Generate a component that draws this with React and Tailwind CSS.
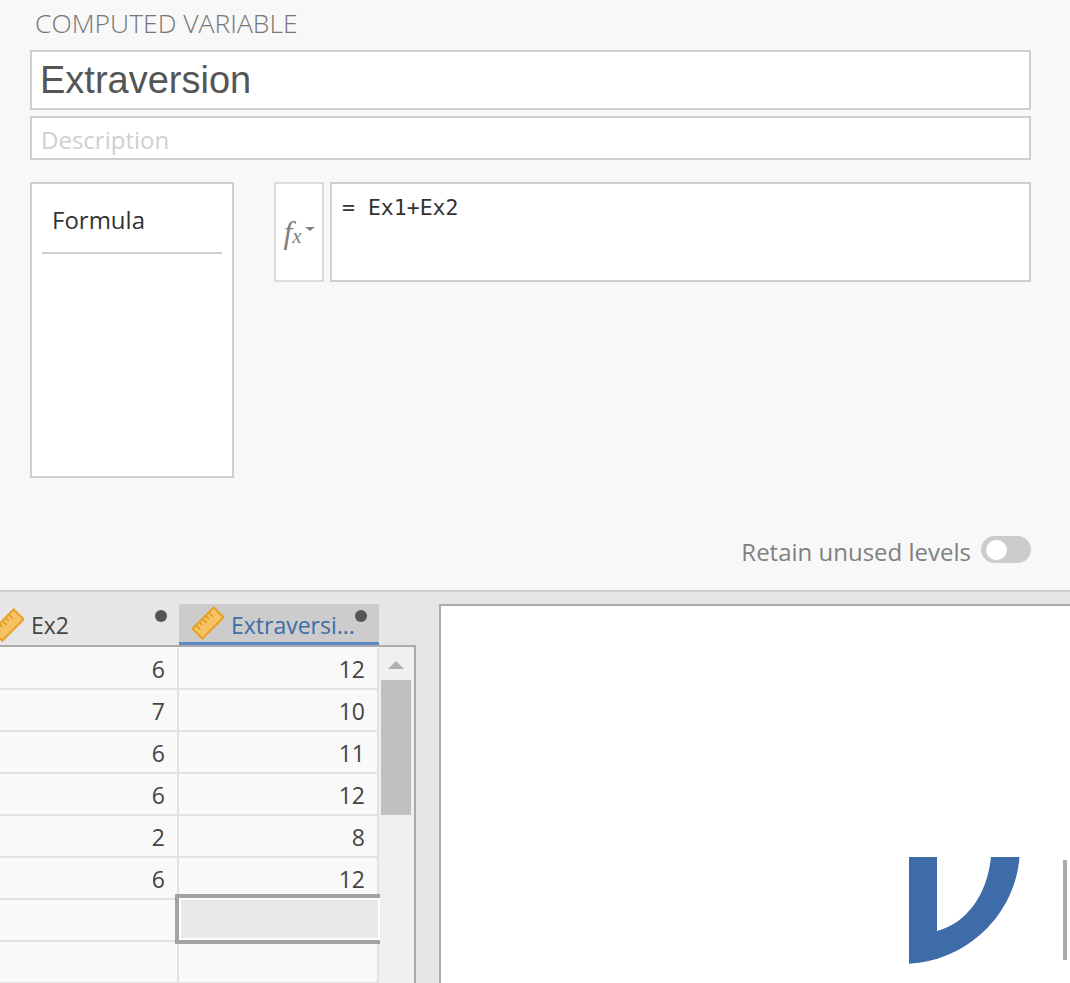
/**
 * App - Computed variable editor above the spreadsheet and results panes.
 */

const ROWS = [
  ["6", "12"],
  ["7", "10"],
  ["6", "11"],
  ["6", "12"],
  ["2", "8"],
  ["6", "12"],
  ["", ""],
  ["", ""],
];

const SELECTED_ROW = 6;

// ---------------------------------------------------------------------------
// Icons
// ---------------------------------------------------------------------------

function RulerIcon({ className = "" }) {
  return (
    <svg className={className} viewBox="0 0 32 34" fill="none" aria-hidden="true">
      <g transform="rotate(-45 16 17)">
        <rect x="1" y="10" width="30" height="14" fill="#f5c264" stroke="#e8a020" strokeWidth="2" />
        <path d="M6 11v5M10.5 11v3.500M15 11v5M19.500 11v3.500M24 11v5" stroke="#d8921a" strokeWidth="1.300" />
      </g>
    </svg>
  );
}

function JamoviMark({ className = "" }) {
  return (
    <svg className={className} viewBox="0 0 111 107" aria-hidden="true">
      <path d="M0 0H28V74C58 66 78 38 82 0H110.500C106 58 58 104 0 106.700Z" fill="#3e6ca8" />
    </svg>
  );
}

// ---------------------------------------------------------------------------
// Editor
// ---------------------------------------------------------------------------

function VariableEditor() {
  return (
    <section className="flex h-[590px] flex-col bg-[#f8f8f8] pl-[30px] pr-[39px] pt-[7px]">
      <h1 className="ml-[5px] h-[43px] text-[26.500px] font-light leading-[33px] text-[#777777] [font-family:'Open_Sans',sans-serif]">
        COMPUTED VARIABLE
      </h1>

      <div className="flex h-[60px] items-center border-2 border-[#cfcfcf] bg-white pl-[8px] pt-[1px] text-[38px] text-[#555555] [font-family:'Liberation_Sans',sans-serif]">
        Extraversion
      </div>
      <div className="mt-[6px] flex h-[44px] items-center border-2 border-[#cfcfcf] bg-white pl-[9px] pt-[4px] text-[24px] text-[#d0d0d0] [font-family:'Open_Sans',sans-serif]">
        Description
      </div>

      <div className="mt-[22px] flex items-start">
        <div className="h-[296px] w-[204px] border-2 border-[#cfcfcf] bg-white px-[10px]">
          <div className="h-[70px] border-b-2 border-[#cfcfcf] pl-[10px] pt-[20px] text-[24px] leading-[32px] text-[#333333] [font-family:'Open_Sans',sans-serif]">
            Formula
          </div>
        </div>

        <div className="ml-[41px] -translate-x-px flex h-[100px] w-[50px] items-center justify-center gap-[3px] border-2 border-[#dcdcdc] bg-white text-[#808080]">
          <span className="text-[32px] italic leading-none [font-family:'Liberation_Serif',serif]">
            f<span className="text-[21px]">x</span>
          </span>
          <span className="mb-[6px] h-0 w-0 border-x-[5px] border-t-[4px] border-x-transparent border-t-[#808080]" />
        </div>

        <div className="ml-[5px] h-[100px] flex-1 border-2 border-[#cfcfcf] bg-white pl-[10px] pt-[11px] text-[21.500px] leading-[26px] text-[#333333] [font-family:'DejaVu_Sans_Mono',monospace]">
          = Ex1+Ex2
        </div>
      </div>

      <div className="mt-[58px] flex items-center justify-end gap-[10px]">
        <span className="text-[24px] leading-[30px] text-[#808080] [font-family:'Open_Sans',sans-serif]">
          Retain unused levels
        </span>
        <span className="mb-[4px] flex h-[27px] w-[50px] items-center rounded-full bg-[#cccccc] pl-[5px]">
          <span className="h-[20px] w-[21px] rounded-full bg-white" />
        </span>
      </div>
    </section>
  );
}

// ---------------------------------------------------------------------------
// Spreadsheet
// ---------------------------------------------------------------------------

function ColumnHeader({ label, active = false }) {
  return (
    <div
      className={`relative flex h-[41px] w-[200px] items-center pl-[13px] ${
        active
          ? "border-b-[3px] border-[#5d88c6] bg-[#cccccc] text-[#3e6da9]"
          : "text-[#444444]"
      }`}
    >
      <RulerIcon className="h-[34px] w-[32px] shrink-0" />
      <span className={`ml-[7px] text-[23px] leading-[32px] ${active ? "mt-[4px]" : ""}`}>{label}</span>
      <span className="absolute right-[12px] top-[6px] h-[12px] w-[12px] rounded-full bg-[#555555]" />
    </div>
  );
}

function Cell({ value }) {
  return (
    <div className="flex h-[42px] w-[200px] items-center justify-end border-b-2 border-r-2 border-[#e2e2e2] bg-[#f9f9f9] pr-[12px] pt-[2px] text-[23px] text-[#444444]">
      {value}
    </div>
  );
}

function DataGrid() {
  return (
    <div className="flex w-[416px] flex-col overflow-hidden [font-family:'Open_Sans',sans-serif]">
      <div className="-ml-[21px] flex pt-[12px]">
        <ColumnHeader label="Ex2" />
        <ColumnHeader label="Extraversi..." active />
      </div>

      <div className="flex flex-1 border-r-2 border-t-2 border-[#ababab]">
        <div className="relative -ml-[21px] flex-none bg-[#f9f9f9] pt-[1px]">
          {ROWS.map((row, index) => (
            <div key={index} className="flex">
              <Cell value={row[0]} />
              <Cell value={row[1]} />
            </div>
          ))}
          <div
            className="absolute left-[196px] h-[50px] w-[205px] border-y-4 border-l-4 border-[#a3a3a3] bg-[#e9e9e9] shadow-[inset_2px_2px_0_#fff,inset_-2px_-2px_0_#fff]"
            style={{ top: SELECTED_ROW * 42 - 5 }}
          />
        </div>

        <div className="flex flex-1 flex-col items-center bg-[#f0f0f0] pr-[2px] pt-[14px]">
          <span className="h-0 w-0 border-x-[8px] border-b-[8px] border-x-transparent border-b-[#b0b0b0]" />
          <span className="mt-[11px] h-[135px] w-[30px] bg-[#c0c0c0]" />
        </div>
      </div>
    </div>
  );
}

// ---------------------------------------------------------------------------
// Results
// ---------------------------------------------------------------------------

function ResultsPane() {
  return (
    <div className="ml-[23px] mt-[12px] flex flex-1 items-start border-l-2 border-t-2 border-[#ababab] bg-white pl-[468px] pt-[251px]">
      <JamoviMark className="h-[107px] w-[111px] shrink-0" />
      <span className="ml-[43px] mt-[3px] h-[100px] w-[4px] shrink-0 bg-[#ababab]" />
    </div>
  );
}

export default function App() {
  return (
    <div className="flex h-[983px] w-[1070px] flex-col overflow-hidden bg-[#e6e6e6]">
      <VariableEditor />
      <div className="h-[2px] bg-[#cfcfcf]" />
      <div className="flex min-h-0 flex-1">
        <DataGrid />
        <ResultsPane />
      </div>
    </div>
  );
}
